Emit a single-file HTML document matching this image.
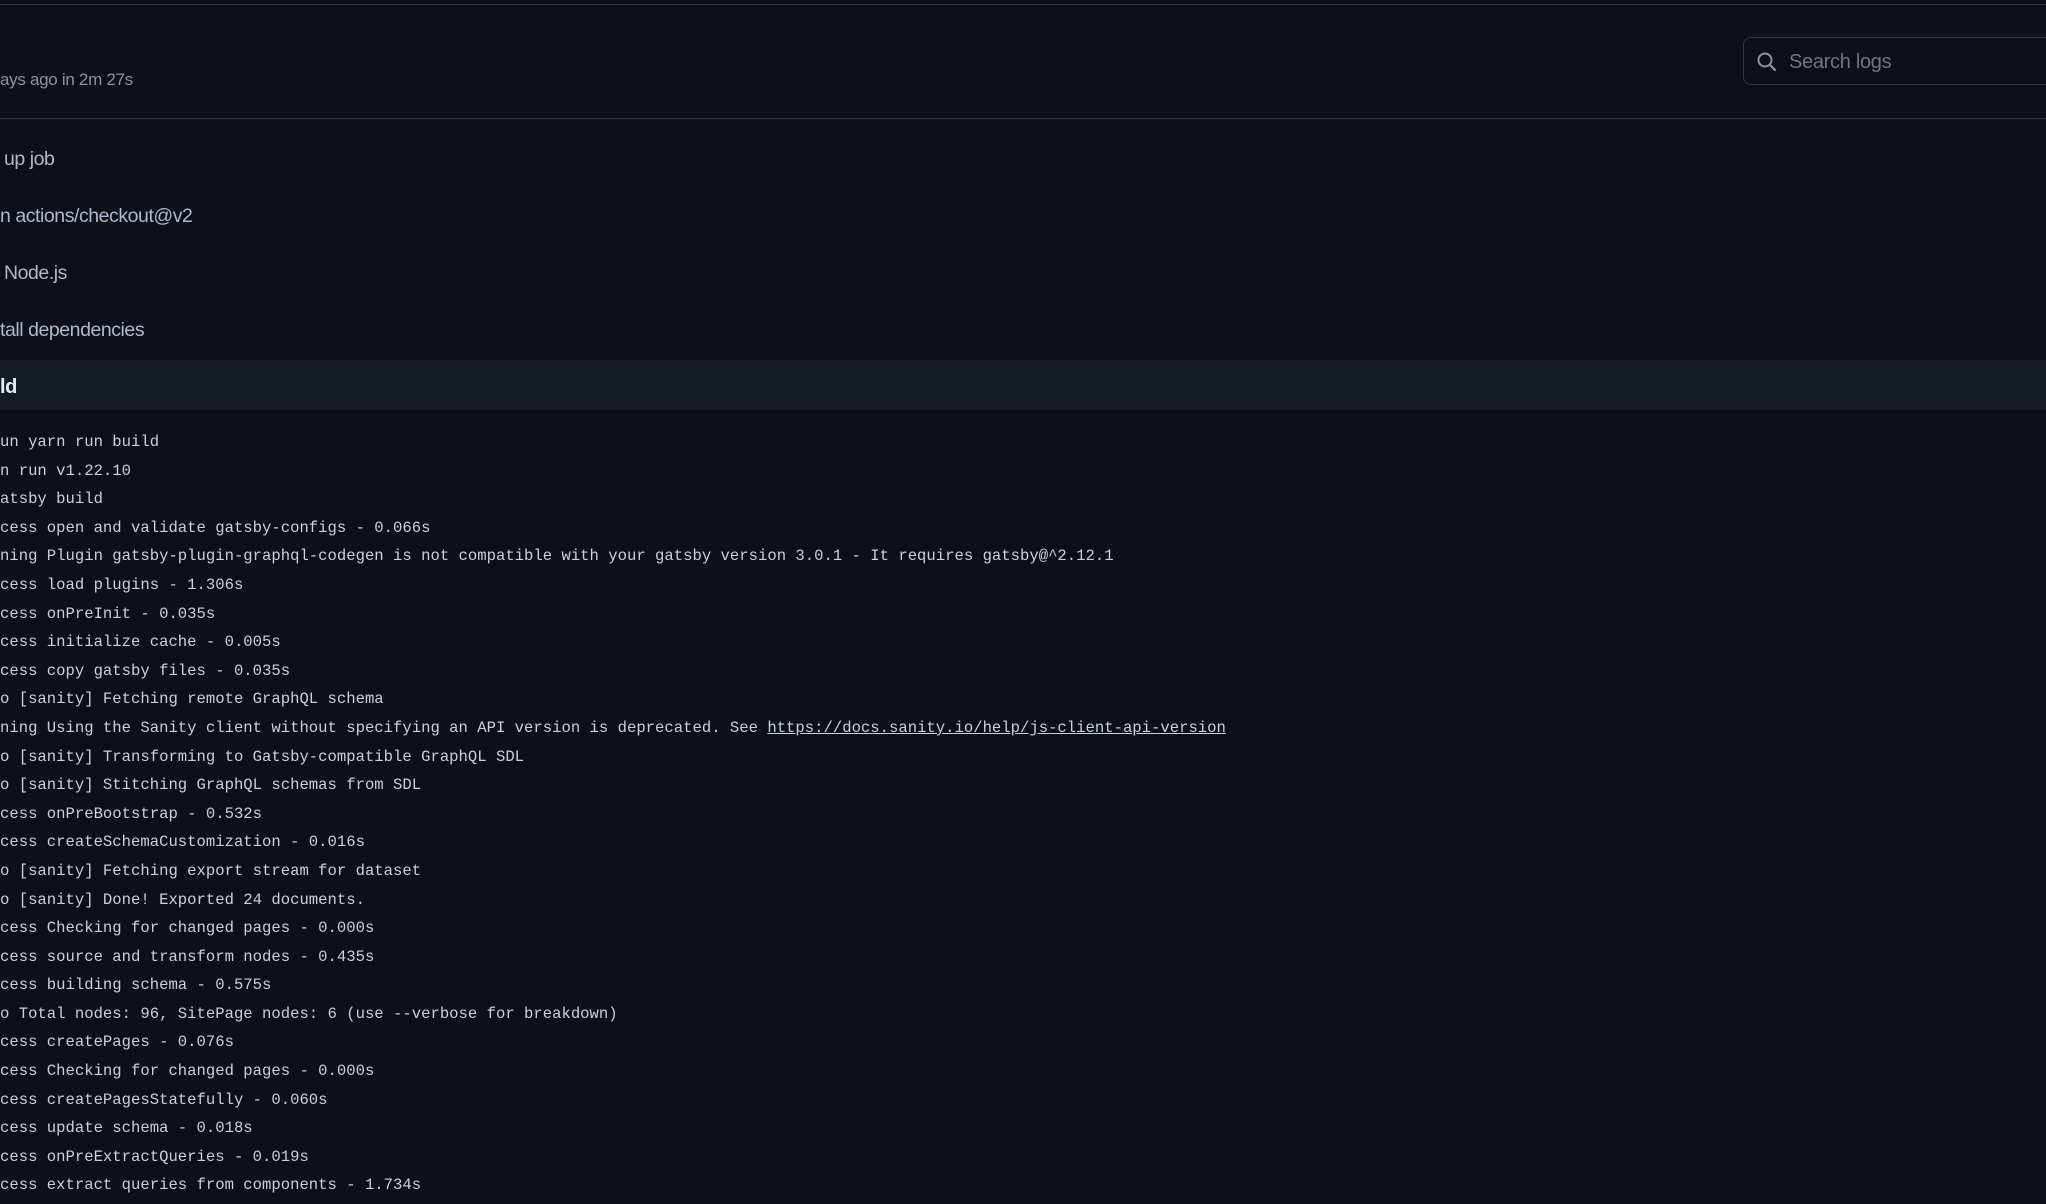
<!DOCTYPE html>
<html><head><meta charset="utf-8"><style>
html,body{margin:0;padding:0;width:2046px;height:1204px;overflow:hidden;background:#0d1117;font-family:"Liberation Sans",sans-serif;}
.hl{position:absolute;left:0;width:2046px;height:2px;background:#21262d;}
.sub{position:absolute;left:0;top:70px;font-size:17px;color:#8b949e;letter-spacing:-0.3px;}
.search{position:absolute;left:1743px;top:37px;width:330px;height:48px;border:1.5px solid #30363d;border-radius:8px;background:#0d1117;box-sizing:border-box;}
.search span{position:absolute;left:45px;top:13px;font-size:20px;color:#6e7681;letter-spacing:-0.3px;}
.search svg{position:absolute;left:12px;top:13px;}
.step{position:absolute;left:0;font-size:19.5px;color:#adbac7;letter-spacing:-0.45px;}
.buildrow{position:absolute;left:0;top:360px;width:2046px;height:50px;background:#161b22;}
.buildrow span{position:absolute;left:0;top:16px;font-size:20px;font-weight:bold;color:#e6edf3;letter-spacing:-0.4px;}
.log{position:absolute;left:0;top:428px;font-family:"Liberation Mono",monospace;font-size:15.6px;line-height:28.6px;color:#c9d1d9;white-space:pre;}
.log a{color:#c9d1d9;text-decoration:underline;}
</style></head><body>
<div class="hl" style="top:4px;height:1px;background:#30363d"></div>
<div class="sub">ays ago in 2m 27s</div>
<div class="search"><svg width="22" height="22" viewBox="0 0 22 22"><circle cx="9" cy="9" r="6.5" fill="none" stroke="#8b949e" stroke-width="2"/><path d="M14 14 L19 19" stroke="#8b949e" stroke-width="2.2" stroke-linecap="round"/></svg><span>Search logs</span></div>
<div class="hl" style="top:118px;height:1px;background:#30363d"></div>
<div class="step" style="top:148px;left:4px">up job</div>
<div class="step" style="top:205px">n actions/checkout@v2</div>
<div class="step" style="top:262px;left:4px">Node.js</div>
<div class="step" style="top:319px">tall dependencies</div>
<div class="buildrow"><span>ld</span></div>
<div class="log">un yarn run build
n run v1.22.10
atsby build
cess open and validate gatsby-configs - 0.066s
ning Plugin gatsby-plugin-graphql-codegen is not compatible with your gatsby version 3.0.1 - It requires gatsby@^2.12.1
cess load plugins - 1.306s
cess onPreInit - 0.035s
cess initialize cache - 0.005s
cess copy gatsby files - 0.035s
o [sanity] Fetching remote GraphQL schema
ning Using the Sanity client without specifying an API version is deprecated. See <a>https://docs.sanity.io/help/js-client-api-version</a>
o [sanity] Transforming to Gatsby-compatible GraphQL SDL
o [sanity] Stitching GraphQL schemas from SDL
cess onPreBootstrap - 0.532s
cess createSchemaCustomization - 0.016s
o [sanity] Fetching export stream for dataset
o [sanity] Done! Exported 24 documents.
cess Checking for changed pages - 0.000s
cess source and transform nodes - 0.435s
cess building schema - 0.575s
o Total nodes: 96, SitePage nodes: 6 (use --verbose for breakdown)
cess createPages - 0.076s
cess Checking for changed pages - 0.000s
cess createPagesStatefully - 0.060s
cess update schema - 0.018s
cess onPreExtractQueries - 0.019s
cess extract queries from components - 1.734s</div>
</body></html>
